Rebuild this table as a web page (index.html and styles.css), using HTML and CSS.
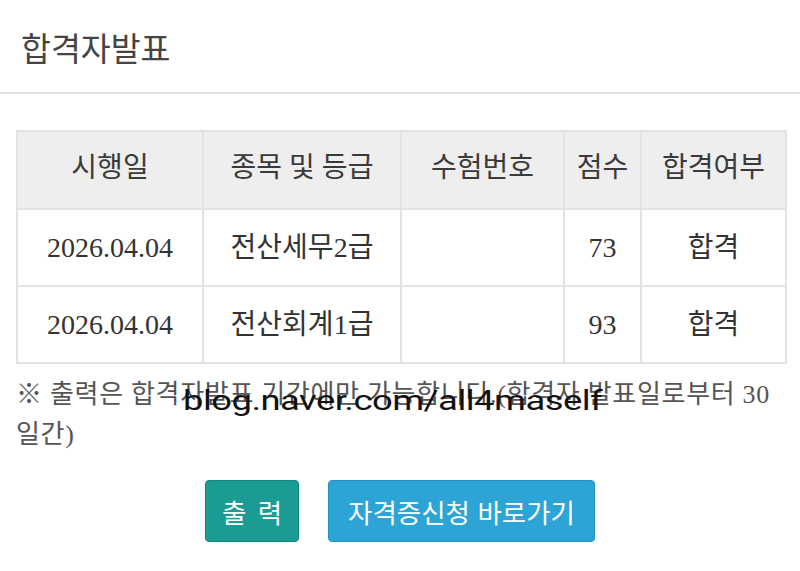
FILE: index.html
```html
<!DOCTYPE html>
<html lang="ko">
<head>
<meta charset="utf-8">
<link rel="stylesheet" href="styles.css">
</head>
<body>
<header class="page-head">
  <h1 class="title">합격자발표</h1>
</header>
<main class="content">
  <table class="result">
    <colgroup>
      <col class="c1"><col class="c2"><col class="c3"><col class="c4"><col class="c5">
    </colgroup>
    <thead>
      <tr><th>시행일</th><th>종목 및 등급</th><th>수험번호</th><th>점수</th><th>합격여부</th></tr>
    </thead>
    <tbody>
      <tr><td>2026.04.04</td><td>전산세무2급</td><td></td><td>73</td><td>합격</td></tr>
      <tr><td>2026.04.04</td><td>전산회계1급</td><td></td><td>93</td><td>합격</td></tr>
    </tbody>
  </table>
  <div class="note-wrap">
    <p class="note">※ 출력은 합격자발표 기간에만 가능합니다.(합격자 발표일로부터 30 일간)</p>
    <span class="watermark">blog.naver.com/all4maself</span>
  </div>
  <div class="actions">
    <button class="btn btn-print">출 력</button>
    <button class="btn btn-apply">자격증신청 바로가기</button>
  </div>
</main>
</body>
</html>
```
FILE: styles.css
```css
html, body {
  margin: 0;
  padding: 0;
  background: #fff;
}
body {
  font-family: "Liberation Serif", "Noto Sans CJK KR", serif;
  color: #333;
}
.page-head {
  height: 92px;
  border-bottom: 2px solid #e2e2e2;
  display: flex;
  align-items: center;
  padding-left: 21px;
}
.title {
  margin: 0;
  font-family: "Noto Sans CJK KR", sans-serif;
  font-weight: 400;
  font-size: 32.5px;
  color: #444;
}
.content {
  padding: 36px 15px 0 16px;
}
.result {
  width: 769px;
  table-layout: fixed;
  border-collapse: collapse;
  font-size: 28px;
  line-height: 36px;
}
.c1 { width: 186px; }
.c2 { width: 198px; }
.c3 { width: 163px; }
.c4 { width: 77px; }
.c5 { width: 145px; }
.result th, .result td {
  border: 2px solid #e3e3e3;
  text-align: center;
  font-weight: 400;
  padding: 0;
  color: #333;
}
.result th {
  background: #eeeeee;
  height: 71px;
  padding-bottom: 5px;
  color: #3a3a3a;
}
.result td {
  height: 75px;
}
.note-wrap {
  position: relative;
  margin-top: 11px;
}
.note {
  margin: 0;
  font-size: 26px;
  letter-spacing: 0.7px;
  line-height: 40px;
  color: #555;
  word-break: keep-all;
}
.watermark {
  position: absolute;
  left: 167px;
  top: 10px;
  font-family: Roboto, "Liberation Sans", sans-serif;
  font-size: 28px;
  line-height: 32px;
  color: #111;
  letter-spacing: -0.4px;
  transform: scaleX(1.3);
  transform-origin: 0 0;
  white-space: nowrap;
}
.actions {
  display: flex;
  justify-content: center;
  gap: 29px;
  margin-top: 25px;
  padding-right: 1px;
}
.btn {
  height: 62px;
  border-radius: 4px;
  font-family: "Noto Sans CJK KR", sans-serif;
  font-size: 26.5px;
  color: #fff;
  padding: 0 10px;
}
.btn-print {
  width: 94px;
  background: #1a9c94;
  border: 1px solid #15867f;
  word-spacing: 4px;
}
.btn-apply {
  width: 267px;
  background: #2ca4d6;
  border: 1px solid #2690bd;
}
```
